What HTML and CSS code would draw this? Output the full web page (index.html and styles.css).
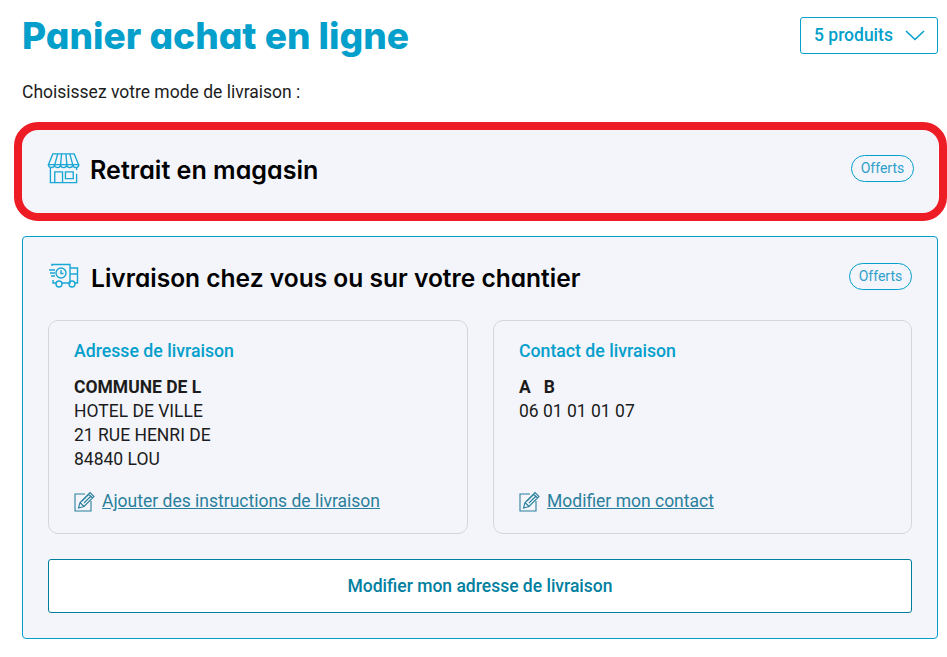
FILE: index.html
```html
<!DOCTYPE html>
<html lang="fr">
<head>
<meta charset="utf-8">
<title>Panier achat en ligne</title>
<link rel="stylesheet" href="styles.css">
</head>
<body>
<main class="page">
  <header class="head">
    <h1 class="title">Panier achat en ligne</h1>
    <button class="count"><span class="count-text">5 produits</span>
      <svg class="chev" width="20" height="11" viewBox="0 0 20 11"><path d="M1 1l9 8.500L19 1" fill="none" stroke="#049fcb" stroke-width="1.6"/></svg>
    </button>
  </header>
  <p class="intro">Choisissez votre mode de livraison :</p>

  <section class="card card-store">
    <div class="card-head">
      <svg class="ico" width="33" height="32" viewBox="0 0 34 32" fill="none" stroke="#1aa7d4" stroke-width="1.4">
        <path d="M6 1.500h22l4.500 11h-31z"/>
        <path d="M11 1.500l-3 11M15 1.500l-1 11M19.500 1.500l1 11M23.500 1.500l3 11"/>
        <path d="M1.500 12.500a3 3 0 0 0 6.200 0a3 3 0 0 0 6.300 0a3 3 0 0 0 6.300 0a3 3 0 0 0 6.300 0a3 3 0 0 0 6.200 0"/>
        <path d="M3.500 16v15h27V22M30.500 16v2"/>
        <path d="M8 31V20h8v11M19 20h8v7h-8z"/>
      </svg>
      <h2 class="card-title title-store">Retrait en magasin</h2>
      <span class="badge">Offerts</span>
    </div>
  </section>

  <section class="card card-delivery">
    <div class="card-head">
      <svg class="ico ico-truck" width="32" height="26" viewBox="0 0 32 26" fill="none" stroke="#1aa7d4" stroke-width="1.4">
        <path d="M4 3V1.500h18V20H14M22 5h7.500v15h-3M22 11h8M8 20H5v-3"/>
        <circle cx="11" cy="21" r="3"/><circle cx="24" cy="21" r="3"/>
        <circle cx="13" cy="10" r="5"/><path d="M13 7v3.500h2.500"/>
        <path d="M1 7h6M2 10h5M3 13h4"/>
      </svg>
      <h2 class="card-title title-delivery">Livraison chez vous ou sur votre chantier</h2>
      <span class="badge">Offerts</span>
    </div>
    <div class="boxes">
      <article class="box">
        <h3 class="box-title">Adresse de livraison</h3>
        <p class="lines"><b>COMMUNE DE L</b><br>HOTEL DE VILLE<br>21 RUE HENRI DE<br>84840 LOU</p>
        <a class="edit" href="#">
          <svg class="pen" width="21" height="21" viewBox="0 0 21 21" fill="none" stroke="#2a7f9c" stroke-width="1.1"><path d="M11 3H1v17h16V10"/><path d="M4.500 17l1.500-5.500L16 1.500 20 5.500 10 15.500zM6 11.500l4 4M14.500 3l4 4M8 10l7-7M10 12l7-7"/></svg>
          <span class="edit-text">Ajouter des instructions de livraison</span>
        </a>
      </article>
      <article class="box">
        <h3 class="box-title">Contact de livraison</h3>
        <p class="lines"><b>A&nbsp;&nbsp; B</b><br>06 01 01 01 07<br>&nbsp;<br>&nbsp;</p>
        <a class="edit" href="#">
          <svg class="pen" width="21" height="21" viewBox="0 0 21 21" fill="none" stroke="#2a7f9c" stroke-width="1.1"><path d="M11 3H1v17h16V10"/><path d="M4.500 17l1.500-5.500L16 1.500 20 5.500 10 15.500zM6 11.500l4 4M14.500 3l4 4M8 10l7-7M10 12l7-7"/></svg>
          <span class="edit-text">Modifier mon contact</span>
        </a>
      </article>
    </div>
    <button class="change">Modifier mon adresse de livraison</button>
  </section>
</main>
</body>
</html>
```
FILE: styles.css
```css
* { box-sizing: border-box; }
html, body { margin: 0; padding: 0; background: #fff; }
body { font-family: Roboto, sans-serif; font-size: 17.5px; color: #1c1c1c; overflow: hidden; }
.page { padding: 0 9px 0 22px; height: 657px; }
.head { display: flex; justify-content: space-between; align-items: flex-start; padding-top: 17px; height: 73px; }
.title { margin: 0; font-family: Inter, sans-serif; font-feature-settings: "cv11"; font-weight: 800; font-size: 37.1px; line-height: 38px; color: #049fcb; }
.count { display: flex; align-items: center; justify-content: space-between; width: 138px; height: 37px; padding: 0 12px 0 13px; background: #fff; border: 1px solid #049fcb; border-radius: 3px; font: 500 17.5px Roboto, sans-serif; color: #049fcb; }
.count-text { padding-bottom: 2px; }
.intro { margin: 0; height: 57px; line-height: 39px; }
.card { position: relative; background: #f3f5fb; border-radius: 4px; }
.card-store { height: 83px; padding: 20px 24px 0 25px; margin-bottom: 23px; }
.card-store::after { content: ""; position: absolute; inset: -8px -9px -8px -8px; border: 8px solid #ee1c25; border-radius: 24px; }
.card-delivery { height: 403px; border: 1px solid #049fcb; padding: 21px 25px 0 25px; }
.card-head { display: flex; align-items: center; height: 36px; }
.ico { flex: none; margin-right: 10px; }
.ico-truck { margin-right: 11px; }
.card-title { margin: 0; flex: 1; padding-top: 4px; font-family: Inter, sans-serif; font-feature-settings: "cv11"; font-weight: 600; line-height: 32px; color: #000; }
.title-store { font-size: 25.1px; }
.title-delivery { font-size: 24.55px; }
.badge { flex: none; width: 63px; height: 27px; line-height: 25px; text-align: center; border: 1px solid #049fcb; border-radius: 14px; font-size: 14px; color: #2f9fc9; }
.boxes { display: grid; grid-template-columns: 420px 419px; gap: 25px; margin-top: 26px; }
.box { height: 214px; padding: 19px 25px 0 25px; border: 1px solid #d4d6db; border-radius: 10px; }
.box-title { margin: 0 0 13.3px; font-size: 17.7px; font-weight: 500; line-height: 22px; color: #049fcb; }
.lines { margin: 0 0 20.7px; line-height: 24px; height: 95px; }
.lines b { font-weight: 700; }
.edit { display: flex; align-items: center; gap: 7px; color: #2a7f9c; text-decoration: none; }
.edit-text { text-decoration: underline; }
.pen { flex: none; }
.change { display: block; width: 100%; height: 54px; margin-top: 25px; background: #fff; border: 1px solid #00809f; border-radius: 3px; font: 500 17.5px Roboto, sans-serif; color: #00809f; }
```
